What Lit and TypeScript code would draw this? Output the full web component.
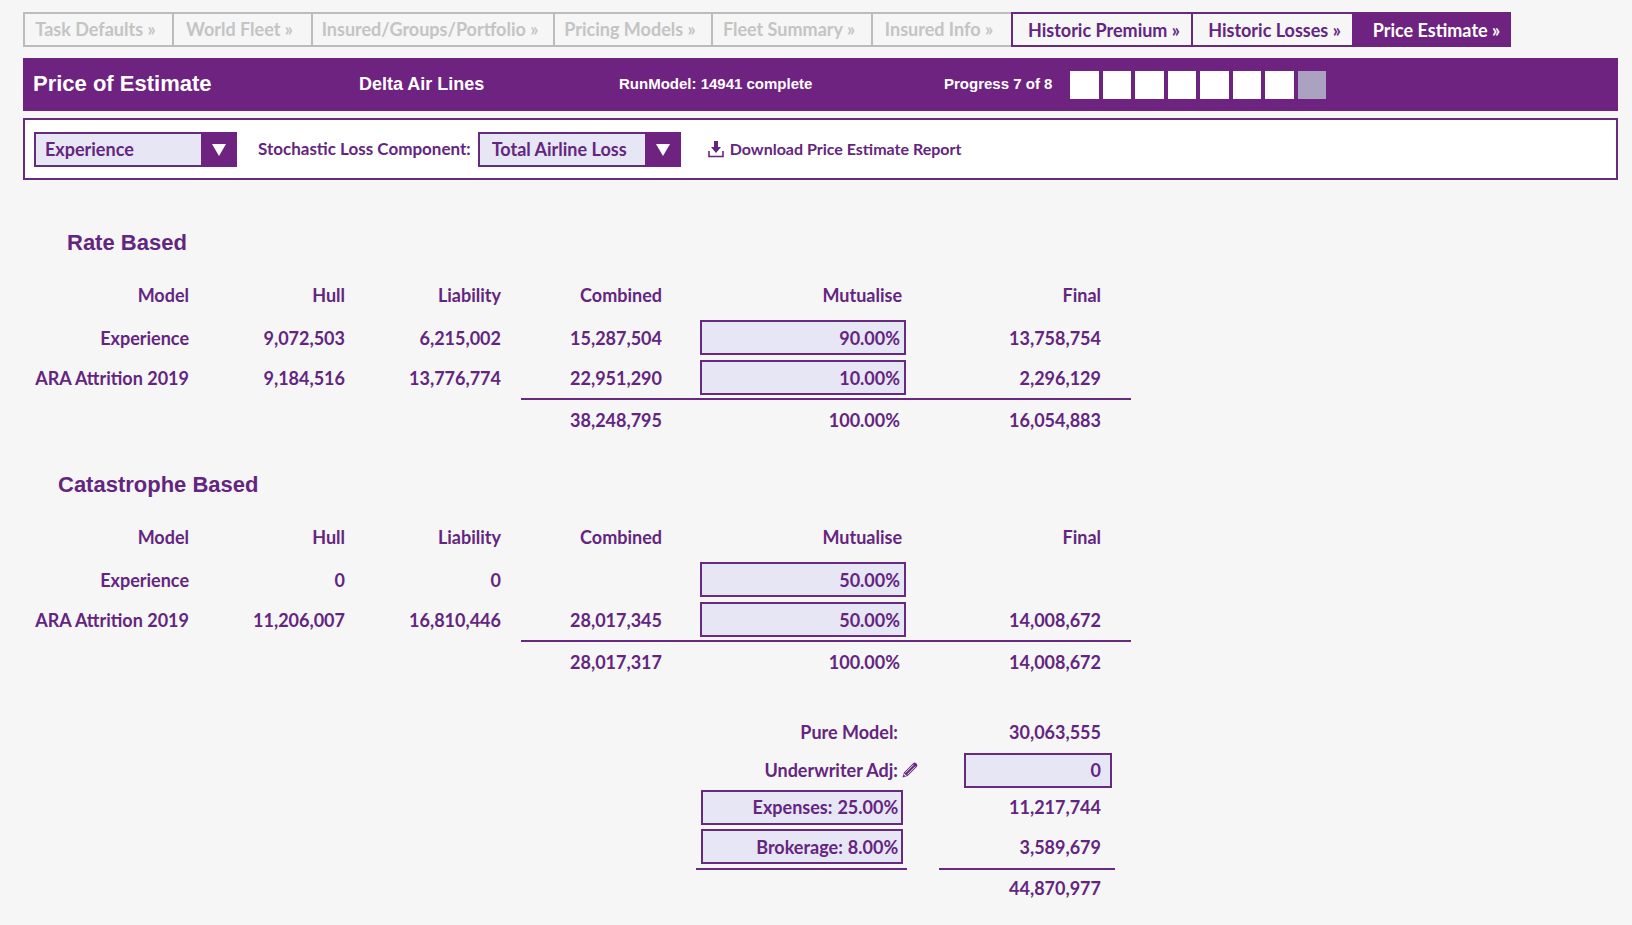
import { LitElement, html, css, svg, nothing } from "lit";
import { customElement, property, state } from "lit/decorators.js";
import { classMap } from "lit/directives/class-map.js";
import { styleMap } from "lit/directives/style-map.js";

interface Tab {
  label: string;
  status: "disabled" | "open" | "current";
}

interface ModelRow {
  model: string;
  hull: string;
  liability: string;
  combined: string;
  mutualise: string;
  final: string;
}

interface ModelTotals {
  combined: string;
  mutualise: string;
  final: string;
}

const TABS: Tab[] = [
  { label: "Task Defaults", status: "disabled" },
  { label: "World Fleet", status: "disabled" },
  { label: "Insured/Groups/Portfolio", status: "disabled" },
  { label: "Pricing Models", status: "disabled" },
  { label: "Fleet Summary", status: "disabled" },
  { label: "Insured Info", status: "disabled" },
  { label: "Historic Premium", status: "open" },
  { label: "Historic Losses", status: "open" },
  { label: "Price Estimate", status: "current" },
];

const RATE_ROWS: ModelRow[] = [
  { model: "Experience", hull: "9,072,503", liability: "6,215,002", combined: "15,287,504", mutualise: "90.00%", final: "13,758,754" },
  { model: "ARA Attrition 2019", hull: "9,184,516", liability: "13,776,774", combined: "22,951,290", mutualise: "10.00%", final: "2,296,129" },
];

const CATASTROPHE_ROWS: ModelRow[] = [
  { model: "Experience", hull: "0", liability: "0", combined: "", mutualise: "50.00%", final: "" },
  { model: "ARA Attrition 2019", hull: "11,206,007", liability: "16,810,446", combined: "28,017,345", mutualise: "50.00%", final: "14,008,672" },
];

const base = css`
  :host {
    --purple: #6f2380;
    --ink: #642580;
    --line: #662a7e;
    --field: #e7e6f5;
    --page: #f6f6f6;
    --muted: #c4c4c4;
    --muted-line: #bcbcbc;
    display: block;
    color: var(--ink);
    font: 700 18px/24px Lato, Carlito, "Open Sans", sans-serif;
  }
  * {
    box-sizing: border-box;
  }
  input,
  select,
  button {
    margin: 0;
    font: inherit;
    color: inherit;
  }
  .field {
    height: 35px;
    border: 2px solid var(--line);
    border-radius: 0;
    background: var(--field);
    text-align: right;
  }
`;

@customElement("step-tabs")
export class StepTabs extends LitElement {
  static styles = [
    base,
    css`
      .tabs {
        display: grid;
        grid-template-columns: 149px 139px 242px 158px 160px 140px 180px 161px 159px;
      }
      .tab {
        display: flex;
        align-items: center;
        justify-content: center;
        height: 35px;
        padding: 0 6px 2px 0;
        border: 2px solid var(--muted-line);
        border-right: 0;
        color: var(--muted);
        text-decoration: none;
        white-space: nowrap;
      }
      .open {
        padding: 0 0 0 4px;
        border-color: var(--line);
        color: var(--ink);
      }
      .current {
        padding: 0 0 0 8px;
        border-color: var(--purple);
        background: var(--purple);
        color: #fff;
      }
    `,
  ];

  render() {
    return html`<nav class="tabs" aria-label="Pricing steps">
      ${TABS.map(
        (t) => html`<a
          class=${classMap({ tab: true, open: t.status === "open", current: t.status === "current" })}
          href=${t.status === "disabled" ? nothing : "#"}
          aria-disabled=${t.status === "disabled" ? "true" : nothing}
          aria-current=${t.status === "current" ? "page" : nothing}
          >${t.label} »</a
        >`
      )}
    </nav>`;
  }
}

@customElement("status-banner")
export class StatusBanner extends LitElement {
  @property({ type: Number }) done = 7;
  @property({ type: Number }) total = 8;

  static styles = [
    base,
    css`
      .banner {
        display: grid;
        grid-template-columns: 326px 260px 325px 126px 256px;
        align-items: center;
        min-height: 53px;
        padding: 0 10px;
        background: var(--purple);
        color: #fff;
        font: 700 15px/20px "Liberation Sans", Arial, sans-serif;
        white-space: nowrap;
      }
      .title {
        margin: 0;
        padding-bottom: 2px;
        font-size: 22px;
        line-height: 28px;
      }
      .text {
        padding-bottom: 2px;
      }
      .client {
        font-size: 18px;
      }
      .steps {
        display: grid;
        grid-auto-flow: column;
        grid-auto-columns: 1fr;
        gap: 4px;
      }
      .step {
        height: 28px;
        background: #aba2c1;
      }
      .done {
        background: #fff;
      }
    `,
  ];

  render() {
    return html`<header class="banner">
      <h1 class="title">Price of Estimate</h1>
      <span class="text client">Delta Air Lines</span>
      <span class="text">RunModel: 14941 complete</span>
      <span class="text">Progress ${this.done} of ${this.total}</span>
      <div class="steps" aria-hidden="true">
        ${Array.from({ length: this.total }, (_, i) => html`<span class=${classMap({ step: true, done: i < this.done })}></span>`)}
      </div>
    </header>`;
  }
}

@customElement("filter-bar")
export class FilterBar extends LitElement {
  static styles = [
    base,
    css`
      .bar {
        display: flex;
        align-items: center;
        min-height: 62px;
        padding: 0 9px;
        border: 2px solid var(--line);
        background: #fff;
        white-space: nowrap;
      }
      .picker {
        position: relative;
        width: 203px;
      }
      .select {
        display: block;
        width: 100%;
        height: 35px;
        padding: 0 40px 0 9px;
        border: 2px solid var(--line);
        border-radius: 0;
        background: var(--field);
        appearance: none;
      }
      .component {
        padding-left: 12px;
      }
      .arrow {
        position: absolute;
        top: 0;
        right: 0;
        width: 36px;
        height: 35px;
        background: var(--purple);
        pointer-events: none;
      }
      .label {
        margin: 0 7px 0 21px;
        font-size: 17px;
      }
      .download {
        display: flex;
        align-items: center;
        gap: 6px;
        margin-left: 27px;
        color: inherit;
        font-size: 16px;
        text-decoration: none;
      }
    `,
  ];

  private arrow() {
    return html`<svg class="arrow" viewBox="0 0 36 35" aria-hidden="true">
      ${svg`<path d="M11 12h14l-7 12z" fill="#fff"/>`}
    </svg>`;
  }

  render() {
    return html`<div class="bar">
      <div class="picker">
        <select class="select" aria-label="Model basis">
          <option>Experience</option>
          <option>ARA Attrition 2019</option>
        </select>
        ${this.arrow()}
      </div>
      <label class="label" for="component">Stochastic Loss Component:</label>
      <div class="picker">
        <select class="select component" id="component">
          <option>Total Airline Loss</option>
          <option>Hull</option>
          <option>Liability</option>
        </select>
        ${this.arrow()}
      </div>
      <a class="download" href="#">
        <svg width="16" height="17" viewBox="0 0 16 17" aria-hidden="true">
          <path d="M6 0h4v6h3l-5 6-5-6h3z" fill="currentColor" />
          <path d="M1 10v5.5h14V10" fill="none" stroke="currentColor" stroke-width="1.6" />
        </svg>
        Download Price Estimate Report
      </a>
    </div>`;
  }
}

@customElement("model-section")
export class ModelSection extends LitElement {
  @property() heading = "";
  @property({ attribute: false }) rows: ModelRow[] = [];
  @property({ attribute: false }) totals: ModelTotals = { combined: "", mutualise: "", final: "" };
  @property({ type: Boolean }) wide = false;

  static styles = [
    base,
    css`
      .heading {
        margin: 0 0 15px 44px;
        font: 700 22px/28px "Liberation Sans", Arial, sans-serif;
      }
      .wide {
        margin-left: 35px;
      }
      .table {
        width: 1108px;
        table-layout: fixed;
        border-collapse: separate;
        border-spacing: 0;
        text-align: right;
        white-space: nowrap;
      }
      .c-model {
        width: 166px;
      }
      .c-hull {
        width: 156px;
      }
      .c-liability {
        width: 176px;
      }
      .c-combined {
        width: 179px;
      }
      .c-mutualise {
        width: 206px;
      }
      th,
      td {
        padding: 0;
        font-weight: 700;
        text-align: right;
      }
      thead th {
        height: 46px;
      }
      tbody th,
      tbody td {
        height: 40px;
        padding-bottom: 1px;
      }
      tfoot td {
        height: 42px;
      }
      tfoot .sum {
        border-top: 2px solid var(--line);
      }
      .liability {
        padding-right: 20px;
      }
      .combined {
        padding-right: 38px;
      }
      .final {
        padding-right: 30px;
      }
      thead .mutualise {
        padding-right: 4px;
      }
      tfoot .mutualise {
        padding-right: 6px;
      }
      .field {
        display: block;
        width: 100%;
        padding: 0 4px;
      }
    `,
  ];

  render() {
    return html`<section>
      <h2 class=${classMap({ heading: true, wide: this.wide })}>${this.heading}</h2>
      <table class="table">
        <colgroup>
          <col class="c-model" />
          <col class="c-hull" />
          <col class="c-liability" />
          <col class="c-combined" />
          <col class="c-mutualise" />
          <col />
        </colgroup>
        <thead>
          <tr>
            <th scope="col">Model</th>
            <th scope="col">Hull</th>
            <th scope="col" class="liability">Liability</th>
            <th scope="col" class="combined">Combined</th>
            <th scope="col" class="mutualise">Mutualise</th>
            <th scope="col" class="final">Final</th>
          </tr>
        </thead>
        <tbody>
          ${this.rows.map(
            (r) => html`<tr>
              <th scope="row">${r.model}</th>
              <td>${r.hull}</td>
              <td class="liability">${r.liability}</td>
              <td class="combined">${r.combined}</td>
              <td><input class="field" .value=${r.mutualise} aria-label="${this.heading} ${r.model} mutualise" /></td>
              <td class="final">${r.final}</td>
            </tr>`
          )}
        </tbody>
        <tfoot>
          <tr>
            <td colspan="3"></td>
            <td class="sum combined">${this.totals.combined}</td>
            <td class="sum mutualise">${this.totals.mutualise}</td>
            <td class="sum final">${this.totals.final}</td>
          </tr>
        </tfoot>
      </table>
    </section>`;
  }
}

@customElement("price-summary")
export class PriceSummary extends LitElement {
  @state() private adjustment = "0";
  @state() private expenses = "25.00%";
  @state() private brokerage = "8.00%";

  static styles = [
    base,
    css`
      .summary {
        display: grid;
        grid-template-columns: 211px 176px;
        grid-template-rows: 39px 38px 36px 43px 40px;
        column-gap: 32px;
        align-items: center;
        margin-left: 673px;
        text-align: right;
        white-space: nowrap;
      }
      .label {
        padding-right: 9px;
      }
      .adjust {
        display: flex;
        align-items: center;
        justify-content: flex-end;
        gap: 4px;
        margin-right: -11px;
      }
      .edit {
        display: flex;
        padding: 0;
        border: 0;
        background: none;
      }
      .value {
        padding-right: 14px;
      }
      .rate {
        display: flex;
        align-items: center;
        justify-content: flex-end;
        gap: 5px;
        margin: 0 4px 0 5px;
        padding-right: 3px;
      }
      .percent {
        padding: 0;
        border: 0;
        background: none;
        text-align: right;
      }
      .amount {
        width: 148px;
        justify-self: end;
        margin-right: 3px;
        padding: 0 9px;
      }
      .total {
        align-self: stretch;
        padding-top: 6px;
        border-top: 2px solid var(--line);
      }
    `,
  ];

  private rate(label: string, value: string) {
    return html`<label class="field rate"
      >${label} <input class="percent" style=${styleMap({ width: `calc(${value.length}ch - 2px)` })} .value=${value}
    /></label>`;
  }

  render() {
    return html`<section class="summary" aria-label="Price summary">
      <span class="label">Pure Model:</span>
      <span class="value">30,063,555</span>

      <span class="adjust">
        <label for="adjustment">Underwriter Adj:</label>
        <button class="edit" aria-label="Edit underwriter adjustment">
          <svg width="16" height="16" viewBox="0 0 16 16" aria-hidden="true">
            <path d="M0.5 15.5 2 10.4 11.2 1.2q1.4-1.2 2.8 0l.8.8q1.2 1.4 0 2.8L5.6 14z" fill="currentColor" />
            <path d="M3.6 10.6 11.6 2.6M5.4 12.4 13.4 4.4" stroke="#f6f6f6" stroke-width="0.9" />
            <path d="M1.9 11.8 4.2 14.1" stroke="#f6f6f6" stroke-width="1.2" />
          </svg>
        </button>
      </span>
      <input class="field amount" id="adjustment" .value=${this.adjustment} />

      ${this.rate("Expenses:", this.expenses)}
      <span class="value">11,217,744</span>

      ${this.rate("Brokerage:", this.brokerage)}
      <span class="value">3,589,679</span>

      <span class="total"></span>
      <span class="total value">44,870,977</span>
    </section>`;
  }
}

@customElement("app-root")
export class AppRoot extends LitElement {
  static styles = [
    base,
    css`
      :host {
        min-height: 100vh;
        background: var(--page);
      }
      .page {
        display: flex;
        flex-direction: column;
        padding: 12px 14px 12px 23px;
      }
      .banner {
        margin-top: 11px;
      }
      .filters {
        margin-top: 7px;
      }
      .rate {
        margin-top: 49px;
      }
      .catastrophe {
        margin-top: 31px;
      }
      .summary {
        margin-top: 30px;
      }
    `,
  ];

  render() {
    return html`<main class="page">
      <step-tabs></step-tabs>
      <status-banner class="banner"></status-banner>
      <filter-bar class="filters"></filter-bar>
      <model-section
        class="rate"
        heading="Rate Based"
        .rows=${RATE_ROWS}
        .totals=${{ combined: "38,248,795", mutualise: "100.00%", final: "16,054,883" }}
      ></model-section>
      <model-section
        class="catastrophe"
        heading="Catastrophe Based"
        wide
        .rows=${CATASTROPHE_ROWS}
        .totals=${{ combined: "28,017,317", mutualise: "100.00%", final: "14,008,672" }}
      ></model-section>
      <price-summary class="summary"></price-summary>
    </main>`;
  }
}
